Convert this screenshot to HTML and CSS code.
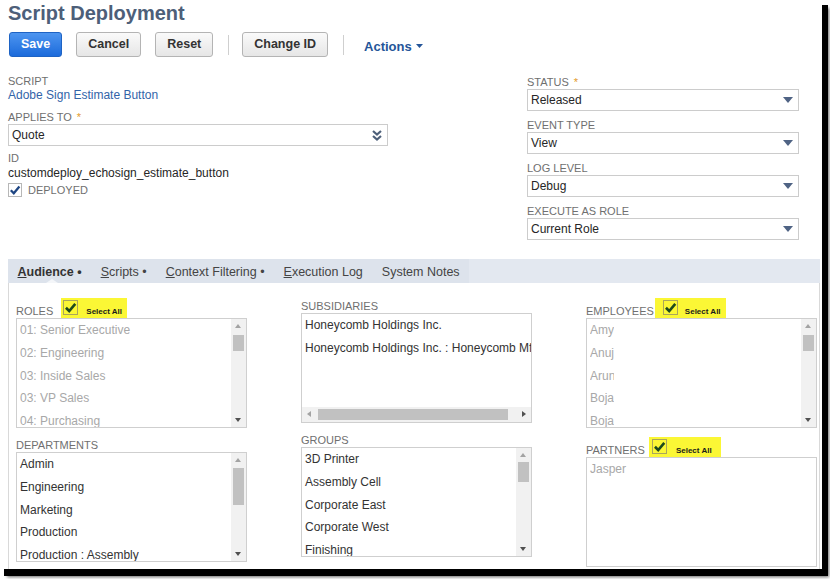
FILE: index.html
```html
<!DOCTYPE html>
<html lang="en">
<head>
<meta charset="utf-8">
<title>Script Deployment</title>
<link rel="stylesheet" href="styles.css">
</head>
<body>
<div class="page">
<div class="frame">
  <h1 class="title">Script Deployment</h1>

  <div class="toolbar">
    <button class="btn btn-primary">Save</button>
    <button class="btn">Cancel</button>
    <button class="btn">Reset</button>
    <span class="sep"></span>
    <button class="btn">Change ID</button>
    <span class="sep"></span>
    <span class="actions">Actions<svg class="caret" width="7" height="4" viewBox="0 0 7 4"><path d="M0 0H7L3.5 4Z" fill="#255599"/></svg></span>
  </div>

  <div class="form">
    <div class="col-left">
      <div class="lbl">SCRIPT</div>
      <div class="link">Adobe Sign Estimate Button</div>
      <div class="lbl lbl-gap">APPLIES TO <span class="req">*</span></div>
      <div class="select select-wide">
        <span>Quote</span>
        <svg width="10" height="11" viewBox="0 0 10 11"><path d="M1 1L5 4.5L9 1M1 6L5 9.5L9 6" fill="none" stroke="#4d5f79" stroke-width="2.2"/></svg>
      </div>
      <div class="lbl lbl-id">ID</div>
      <div class="value">customdeploy_echosign_estimate_button</div>
      <div class="check-row">
        <span class="cb"><svg width="12" height="12" viewBox="0 0 12 12"><path d="M1.8 6.2L4.8 9.2L10.4 2.6" fill="none" stroke="#1f4683" stroke-width="2.3"/></svg></span>
        <span class="lbl">DEPLOYED</span>
      </div>
    </div>

    <div class="col-right">
      <div class="field">
        <div class="lbl">STATUS <span class="req">*</span></div>
        <div class="select"><span>Released</span><span class="tri"></span></div>
      </div>
      <div class="field">
        <div class="lbl">EVENT TYPE</div>
        <div class="select"><span>View</span><span class="tri"></span></div>
      </div>
      <div class="field">
        <div class="lbl">LOG LEVEL</div>
        <div class="select"><span>Debug</span><span class="tri"></span></div>
      </div>
      <div class="field">
        <div class="lbl">EXECUTE AS ROLE</div>
        <div class="select"><span>Current Role</span><span class="tri"></span></div>
      </div>
    </div>
  </div>

  <div class="tabbar">
    <div class="tabs">
      <span class="tab tab-active"><u>A</u>udience •</span>
      <span class="tab"><u>S</u>cripts •</span>
      <span class="tab"><u>C</u>ontext Filtering •</span>
      <span class="tab"><u>E</u>xecution Log</span>
      <span class="tab">System Notes</span>
    </div>
  </div>

  <div class="panel">
    <div class="pcol">
      <div class="field-l">
        <div class="frow frow-hl">
          <span class="lbl">ROLES</span>
          <span class="hl hl-roles">
            <span class="hcb"><svg width="13" height="13" viewBox="0 0 12 12"><path d="M1.8 6.2L4.8 9.2L10.4 2.6" fill="none" stroke="#1c4a1c" stroke-width="2.4"/></svg></span>
            <span class="hl-text">Select All</span>
          </span>
        </div>
        <div class="listbox disabled">
          <div class="item">01: Senior Executive</div>
          <div class="item">02: Engineering</div>
          <div class="item">03: Inside Sales</div>
          <div class="item">03: VP Sales</div>
          <div class="item">04: Purchasing</div>
          <div class="vscroll"><span class="thumb thumb-a"></span></div>
        </div>
      </div>
      <div class="field-l">
        <div class="frow"><span class="lbl">DEPARTMENTS</span></div>
        <div class="listbox">
          <div class="item">Admin</div>
          <div class="item">Engineering</div>
          <div class="item">Marketing</div>
          <div class="item">Production</div>
          <div class="item">Production : Assembly</div>
          <div class="vscroll"><span class="thumb thumb-b"></span></div>
        </div>
      </div>
    </div>

    <div class="pcol">
      <div class="field-l">
        <div class="frow"><span class="lbl">SUBSIDIARIES</span></div>
        <div class="listbox">
          <div class="item">Honeycomb Holdings Inc.</div>
          <div class="item">Honeycomb Holdings Inc. : Honeycomb Mfg.</div>
          <div class="hscroll"><span class="hthumb"></span></div>
        </div>
      </div>
      <div class="field-l">
        <div class="frow"><span class="lbl">GROUPS</span></div>
        <div class="listbox">
          <div class="item">3D Printer</div>
          <div class="item">Assembly Cell</div>
          <div class="item">Corporate East</div>
          <div class="item">Corporate West</div>
          <div class="item">Finishing</div>
          <div class="vscroll"><span class="thumb thumb-c"></span></div>
        </div>
      </div>
    </div>

    <div class="pcol">
      <div class="field-l">
        <div class="frow frow-hl">
          <span class="lbl">EMPLOYEES</span>
          <span class="hl hl-emp">
            <span class="hcb"><svg width="13" height="13" viewBox="0 0 12 12"><path d="M1.8 6.2L4.8 9.2L10.4 2.6" fill="none" stroke="#1c4a1c" stroke-width="2.4"/></svg></span>
            <span class="hl-text">Select All</span>
          </span>
        </div>
        <div class="listbox disabled">
          <div class="item"><span class="clip">Amy</span></div>
          <div class="item"><span class="clip">Anuj</span></div>
          <div class="item"><span class="clip">Arun</span></div>
          <div class="item"><span class="clip">Bojan</span></div>
          <div class="item"><span class="clip">Bojana</span></div>
          <div class="vscroll"><span class="thumb thumb-a"></span></div>
        </div>
      </div>
      <div class="field-l">
        <div class="frow frow-hl">
          <span class="lbl">PARTNERS</span>
          <span class="hl hl-par">
            <span class="hcb"><svg width="13" height="13" viewBox="0 0 12 12"><path d="M1.8 6.2L4.8 9.2L10.4 2.6" fill="none" stroke="#1c4a1c" stroke-width="2.4"/></svg></span>
            <span class="hl-text">Select All</span>
          </span>
        </div>
        <div class="listbox disabled">
          <div class="item">Jasper</div>
        </div>
      </div>
    </div>
  </div>
</div>
</div>
</body>
</html>
```

FILE: styles.css
```css
html, body {
  margin: 0;
  padding: 0;
  background: #fff;
}

body {
  font-family: "Liberation Sans", Arial, sans-serif;
  color: #262626;
}

.page {
  width: 830px;
  height: 579px;
  overflow: hidden;
}

.frame {
  width: 822px;
  height: 569px;
  box-sizing: border-box;
  padding: 1px 2px 0 8px;
  background: #fff;
  box-shadow: 5px 6px 0 1px #000, 7px 8px 3px 0 rgba(0, 0, 0, 0.6);
  display: flex;
  flex-direction: column;
}

.title {
  margin: 0;
  font-size: 20px;
  line-height: 24px;
  font-weight: 700;
  color: #4d5f79;
}

/* toolbar */
.toolbar {
  display: flex;
  align-items: center;
  height: 25px;
  margin-top: 7px;
  padding-left: 1px;
}

.btn {
  height: 25px;
  box-sizing: border-box;
  margin: 0 14px 0 0;
  padding: 0 11px;
  border: 1px solid #b4b4b4;
  border-radius: 3px;
  background: linear-gradient(#fafafa, #e6e6e6);
  font-family: "Liberation Sans", Arial, sans-serif;
  font-size: 12.5px;
  font-weight: 700;
  color: #333;
  line-height: 23px;
}

.btn-primary {
  border-color: #1e63c4;
  background: linear-gradient(#4d95f0, #1c6bdb);
  color: #fff;
}

.sep {
  width: 1px;
  height: 20px;
  background: #cfcfcf;
  margin: 0 13px 0 1px;
}

.actions {
  display: flex;
  align-items: center;
  margin-left: 7px;
  padding-top: 3px;
  font-size: 13px;
  font-weight: 700;
  color: #255599;
}

.caret {
  margin-left: 4px;
}

/* main form */
.form {
  display: flex;
  align-items: flex-start;
  margin-top: 18px;
  height: 165px;
}

.col-left {
  width: 380px;
}

.col-right {
  width: 272px;
  margin-left: 139px;
  padding-top: 1px;
}

.lbl {
  font-size: 11px;
  line-height: 13px;
  color: #6f6f6f;
  white-space: nowrap;
}

.req {
  color: #e39a2a;
  margin-left: 2px;
}

.lbl-gap {
  margin-top: 9px;
}

.lbl-id {
  margin-top: 6px;
}

.link {
  font-size: 12px;
  line-height: 14px;
  color: #3264a8;
}

.value {
  margin-top: 1px;
  font-size: 12px;
  line-height: 14px;
  color: #262626;
}

.select {
  height: 22px;
  box-sizing: border-box;
  border: 1px solid #cccccc;
  background: #fff;
  display: flex;
  align-items: center;
  justify-content: space-between;
  padding: 0 5px 0 3px;
  font-size: 12px;
  color: #262626;
}

.select-wide {
  padding-right: 5px;
}

.tri {
  width: 0;
  height: 0;
  border-left: 5px solid transparent;
  border-right: 5px solid transparent;
  border-top: 6px solid #4f6384;
}

.field {
  margin-bottom: 8px;
}

.check-row {
  display: flex;
  align-items: center;
  margin-top: 3px;
  height: 14px;
}

.cb {
  width: 14px;
  height: 14px;
  box-sizing: border-box;
  border: 1px solid #b7b7b7;
  background: #fff;
  display: flex;
  align-items: center;
  justify-content: center;
  margin-right: 6px;
}

/* tabs */
.tabbar {
  margin-top: 19px;
  height: 24px;
  background: #e3e8f0;
  display: flex;
}

.tabs {
  display: flex;
  background: #dde3ec;
}

.tab {
  position: relative;
  padding: 2px 9.5px 0;
  line-height: 22px;
  font-size: 12.5px;
  color: #444;
  white-space: nowrap;
}

.tab-active {
  font-weight: 700;
  color: #333;
}

.tab-active::after {
  content: "";
  position: absolute;
  left: 38px;
  bottom: 0;
  width: 0;
  height: 0;
  border-left: 6px solid transparent;
  border-right: 6px solid transparent;
  border-bottom: 4px solid #f4f6f9;
}

/* panel */
.panel {
  flex: 1;
  min-height: 0;
  overflow: hidden;
  border-left: 1px solid #d9d9d9;
  border-right: 1px solid #d9d9d9;
  padding: 15px 0 0 7px;
  display: grid;
  grid-template-columns: 285px 285px 231px;
  align-content: start;
}

.pcol {
  display: flex;
  flex-direction: column;
}

.field-l + .field-l {
  margin-top: 9px;
}

.frow {
  height: 15px;
  display: flex;
  align-items: flex-end;
}

.frow-hl {
  height: 20px;
}

.hl {
  height: 20px;
  box-sizing: border-box;
  display: flex;
  align-items: flex-start;
  gap: 8px;
  background: #fbf735;
  padding: 0 5px 0 2px;
}

.hl-roles {
  margin-left: 8px;
}

.hl-emp {
  margin-left: 1px;
  padding-left: 8px;
  gap: 7px;
}

.hl-par {
  margin-left: 4px;
  padding-left: 3px;
  padding-right: 9px;
  gap: 9px;
}

.hcb {
  margin-top: 2px;
  width: 15px;
  height: 15px;
  box-sizing: border-box;
  border: 1px solid #aaa65a;
  display: flex;
  align-items: center;
  justify-content: center;
}

.hl-text {
  margin-top: 9px;
  font-size: 8px;
  line-height: 10px;
  font-weight: 700;
  color: #1a1a1a;
  white-space: nowrap;
}

.listbox {
  position: relative;
  width: 231px;
  height: 110px;
  box-sizing: border-box;
  border: 1px solid #cfcfcf;
  background: #fff;
  overflow: hidden;
}

.item {
  padding-left: 3px;
  font-size: 12px;
  line-height: 22.75px;
  color: #333;
  white-space: nowrap;
}

.disabled .item {
  color: #a8a8a8;
}

.clip {
  display: inline-block;
  width: 24px;
  overflow: hidden;
  vertical-align: top;
}

.vscroll {
  position: absolute;
  top: 0;
  right: 0;
  bottom: 0;
  width: 15px;
  background: #f1f1f1;
}

.vscroll::before,
.vscroll::after {
  content: "";
  position: absolute;
  left: 4px;
  width: 0;
  height: 0;
  border-left: 3.5px solid transparent;
  border-right: 3.5px solid transparent;
}

.vscroll::before {
  top: 5px;
  border-bottom: 4px solid #a3a3a3;
}

.vscroll::after {
  bottom: 5px;
  border-top: 4px solid #505050;
}

.thumb {
  position: absolute;
  left: 2px;
  right: 2px;
  background: #c1c1c1;
}

.thumb-a {
  top: 16px;
  height: 16px;
}

.thumb-b {
  top: 15px;
  height: 37px;
}

.thumb-c {
  top: 14px;
  height: 20px;
}

.hscroll {
  position: absolute;
  left: 0;
  right: 0;
  bottom: 0;
  height: 15px;
  background: #f1f1f1;
}

.hscroll::before,
.hscroll::after {
  content: "";
  position: absolute;
  top: 4px;
  width: 0;
  height: 0;
  border-top: 3.5px solid transparent;
  border-bottom: 3.5px solid transparent;
}

.hscroll::before {
  left: 5px;
  border-right: 4px solid #a3a3a3;
}

.hscroll::after {
  right: 5px;
  border-left: 4px solid #505050;
}

.hthumb {
  position: absolute;
  top: 2px;
  height: 11px;
  left: 16px;
  width: 190px;
  background: #c1c1c1;
}
```
